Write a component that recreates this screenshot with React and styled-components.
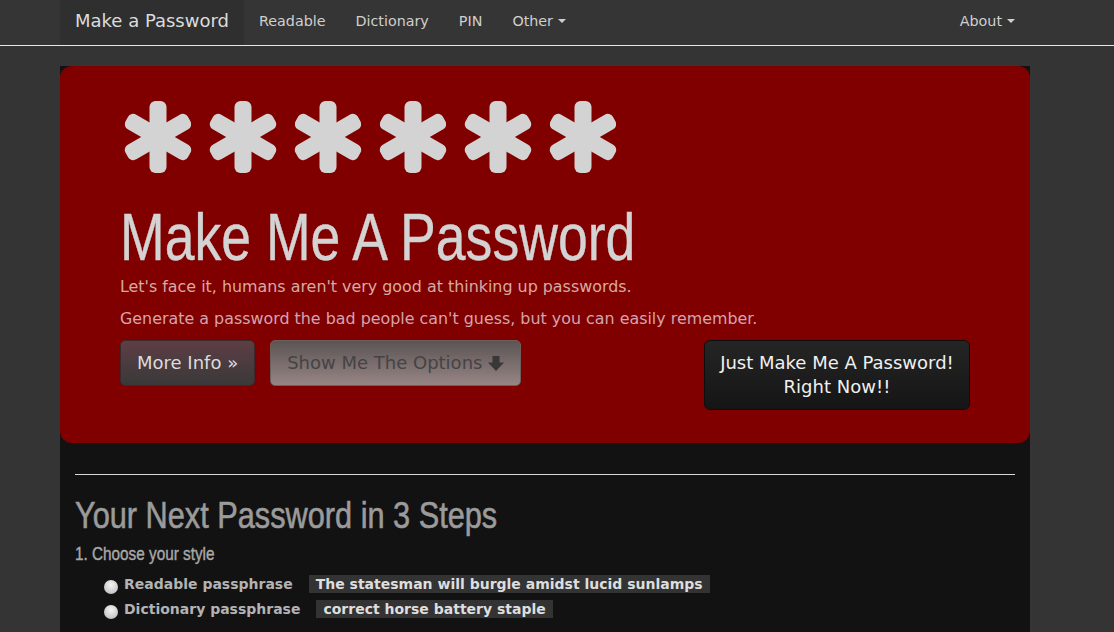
import React from 'react';
import styled, { createGlobalStyle } from 'styled-components';

const GlobalStyle = createGlobalStyle`
  body {
    margin: 0;
    background: #343434;
    font-family: 'DejaVu Sans', 'Liberation Sans', sans-serif;
    color: #ccc;
  }
`;

// no condensed Helvetica here: squeeze Liberation Sans instead
const Narrow = styled.span`
  display: inline-block;
  white-space: nowrap;
  transform: scaleX(${p => p.$scale});
  transform-origin: left center;
`;

const Navbar = styled.div`
  height: 45px;
  border-bottom: 1px solid #e6e6e6;
  background: #353535;
`;

const NavInner = styled.div`
  width: 970px;
  margin-left: 60px;
  height: 100%;
  display: flex;
  align-items: stretch;
`;

const Brand = styled.a`
  display: flex;
  align-items: center;
  padding: 0 15px 4px;
  background: #2f2f2f;
  color: #dcdcdc;
  font-size: 18px;
`;

const NavLink = styled.a`
  display: flex;
  align-items: center;
  padding: 0 15px 4px;
  color: #cfcfcf;
  font-size: 14.3px;
  margin-left: ${p => (p.$push ? 'auto' : '0')};
`;

const Caret = styled.span`
  display: inline-block;
  width: 0;
  height: 0;
  margin-left: 5px;
  border-top: 4px solid #cfcfcf;
  border-left: 4px solid transparent;
  border-right: 4px solid transparent;
`;

const Container = styled.div`
  width: 970px;
  margin: 20px 0 0 60px;
  background: #131213;
  min-height: 580px;
`;

const Jumbotron = styled.div`
  background: #800000;
  border-radius: 12px;
  padding: 35px 60px 33px;
`;

const Stars = styled.div`
  display: flex;
  gap: 17px;
  margin-left: 4px;
  height: 72px;
`;

const Title = styled.h1`
  margin: 27px 0 2px;
  font-family: 'Liberation Sans', sans-serif;
  font-weight: normal;
  font-size: 67px;
  line-height: 74px;
  color: #d3d3d3;
  -webkit-text-stroke: 0.4px #d3d3d3;
`;

const Lead = styled.p`
  margin: 0 0 10px;
  font-size: 15.9px;
  line-height: 22px;
  color: ${p => p.$color};
`;

const ButtonRow = styled.div`
  display: flex;
  justify-content: space-between;
  align-items: flex-start;
`;

const LeftGroup = styled.div`
  display: flex;
  gap: 15px;
`;

const Button = styled.button`
  font-family: 'DejaVu Sans', sans-serif;
  font-size: 18px;
  line-height: 24px;
  padding: 10px 16px;
  border-radius: 5px;
  border: 1px solid ${p => p.$border};
  background: linear-gradient(to bottom, ${p => p.$from}, ${p => p.$to});
  color: ${p => p.$color};
  display: flex;
  align-items: center;
  gap: 6px;
  cursor: pointer;
`;

const BigButton = styled(Button)`
  padding: 10px 15px;
  width: 266px;
  justify-content: center;
  text-align: center;
  border-radius: 6px;
`;

const Body = styled.div`
  padding: 0 15px;
`;

const Rule = styled.hr`
  margin: 31px 0 0;
  border: 0;
  border-top: 1px solid #d8d8d8;
`;

const Heading = styled.h2`
  margin: 20px 0 0;
  font-family: 'Liberation Sans', sans-serif;
  font-weight: normal;
  font-size: 37px;
  line-height: 42px;
  color: #9b9b9b;
  -webkit-text-stroke: 0.6px #9b9b9b;
`;

const Step = styled.h4`
  margin: 5px 0 5px;
  font-family: 'Liberation Sans', sans-serif;
  font-weight: normal;
  font-size: 18px;
  line-height: 24px;
  color: #a8a8a8;
  -webkit-text-stroke: 0.4px #a8a8a8;
`;

const Option = styled.label`
  display: flex;
  align-items: center;
  margin-left: 29px;
  height: 25px;
  font-size: 14px;
  font-weight: bold;
  color: #b3b3b3;
`;

const Radio = styled.span`
  width: 14px;
  height: 14px;
  border-radius: 50%;
  margin: 7px 6px 0 0;
  background: radial-gradient(circle at 50% 35%, #f4f4f4, #c8c8c8 70%, #9a9a9a);
`;

const Sample = styled.code`
  margin-left: ${p => p.$gap}px;
  padding: 1px 7px;
  background: #333;
  color: #dedede;
  font-family: 'DejaVu Sans', sans-serif;
  font-size: 14px;
  font-weight: bold;
`;

const Asterisk = () => (
  <svg width="68" height="72" viewBox="-34 -36 68 72" overflow="visible">
    {[0, 60, -60].map(a => (
      <rect key={a} x="-8.5" y="-36" width="17" height="72" rx="6" fill="#d3d3d3" transform={`rotate(${a})`} />
    ))}
  </svg>
);

const ArrowDown = () => (
  <svg width="16" height="15" viewBox="0 0 16 15">
    <path d="M4.5 0h7v6.5h4.5l-8 8.5-8-8.5h4.5z" fill="#383838" />
  </svg>
);

export default function App() {
  return (
    <>
      <GlobalStyle />
      <Navbar>
        <NavInner>
          <Brand>Make a Password</Brand>
          <NavLink>Readable</NavLink>
          <NavLink>Dictionary</NavLink>
          <NavLink>PIN</NavLink>
          <NavLink>Other<Caret /></NavLink>
          <NavLink $push>About<Caret /></NavLink>
        </NavInner>
      </Navbar>
      <Container>
        <Jumbotron>
          <Stars>
            {[0, 1, 2, 3, 4, 5].map(i => <Asterisk key={i} />)}
          </Stars>
          <Title><Narrow $scale={0.8}>Make Me A Password</Narrow></Title>
          <Lead $color="#d8aaa4">Let's face it, humans aren't very good at thinking up passwords.</Lead>
          <Lead $color="#d3a4b0">Generate a password the bad people can't guess, but you can easily remember.</Lead>
          <ButtonRow>
            <LeftGroup>
              <Button $from="#5e3e45" $to="#393939" $border="#3b2a2c" $color="#dcdcdc">More Info »</Button>
              <Button $from="#5c5454" $to="#978585" $border="#6e5f5f" $color="#444">
                Show Me The Options <ArrowDown />
              </Button>
            </LeftGroup>
            <BigButton $from="#252525" $to="#151515" $border="#0e0e0e" $color="#f0f0f0">
              Just Make Me A Password!<br />Right Now!!
            </BigButton>
          </ButtonRow>
        </Jumbotron>
        <Body>
          <Rule />
          <Heading><Narrow $scale={0.83}>Your Next Password in 3 Steps</Narrow></Heading>
          <Step><Narrow $scale={0.85}>1. Choose your style</Narrow></Step>
          <Option>
            <Radio />Readable passphrase
            <Sample $gap={16}>The statesman will burgle amidst lucid sunlamps</Sample>
          </Option>
          <Option>
            <Radio />Dictionary passphrase
            <Sample $gap={16}>correct horse battery staple</Sample>
          </Option>
        </Body>
      </Container>
    </>
  );
}
